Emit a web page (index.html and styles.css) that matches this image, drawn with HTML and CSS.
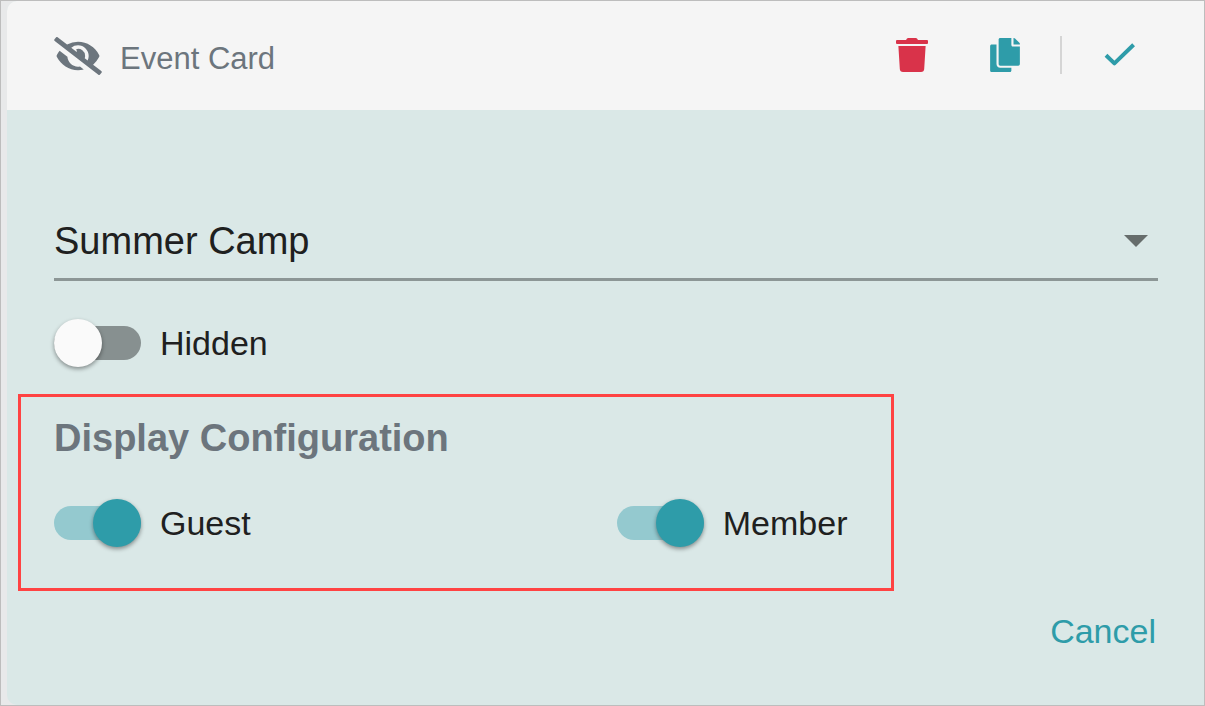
FILE: index.html
```html
<!doctype html>
<html lang="en">

<head>
  <meta charset="UTF-8" />
  <meta name="viewport" content="width=device-width, initial-scale=1.0" />
  <title>Event Card</title>
  <link rel="stylesheet" href="styles.css">
</head>

<body>
  <main class="card">
    <header class="card-header">
      <div class="card-title">
        <svg class="icon-hidden" viewBox="0 0 640 512" aria-hidden="true">
          <path d="M320 400c-75.85 0-137.25-58.71-142.9-133.11L72.2 185.82c-13.79 17.3-26.48 35.59-36.72 55.59a32.35 32.35 0 0 0 0 29.19C89.71 376.41 197.07 448 320 448c26.91 0 52.87-4 77.89-10.46L346 397.39a144.13 144.13 0 0 1-26 2.61zm313.82 58.1l-110.55-85.44a331.25 331.25 0 0 0 81.25-102.07 32.35 32.35 0 0 0 0-29.19C550.29 135.59 442.93 64 320 64a308.15 308.15 0 0 0-147.32 37.7L45.46 3.37A16 16 0 0 0 23 6.18L3.37 31.45A16 16 0 0 0 6.18 53.9l588.36 454.73a16 16 0 0 0 22.46-2.81l19.64-25.27a16 16 0 0 0-2.82-22.45zm-183.72-142l-39.3-30.38A94.75 94.75 0 0 0 416 256a94.76 94.76 0 0 0-121.31-92.21A47.65 47.65 0 0 1 304 192a46.64 46.64 0 0 1-1.54 10l-73.61-56.89A142.31 142.31 0 0 1 320 112a143.92 143.92 0 0 1 144 144c0 21.63-5.29 41.79-13.9 60.11z" />
        </svg>
        <h1>Event Card</h1>
      </div>
      <div class="card-actions">
        <button type="button" class="action action-delete" aria-label="Delete">
          <svg width="32" height="34" viewBox="0 0 32 34">
            <path d="M1 2H10L11 .6Q11.4 0 12.2 0H19.8Q20.6 0 21 .6L22 2H31Q32 2 32 3V5Q32 6 31 6H1Q0 6 0 5V3Q0 2 1 2Z" />
            <path d="M2.4 8H29.6L28.2 31Q28 34 25 34H7Q4 34 3.8 31Z" />
          </svg>
        </button>
        <button type="button" class="action" aria-label="Copy">
          <svg width="30" height="34" viewBox="0 0 448 512">
            <path d="M320 448v40c0 13.255-10.745 24-24 24H24c-13.255 0-24-10.745-24-24V120c0-13.255 10.745-24 24-24h72v296c0 30.879 25.121 56 56 56h168zm0-344V0H152c-13.255 0-24 10.745-24 24v368c0 13.255 10.745 24 24 24h272c13.255 0 24-10.745 24-24V128H344c-13.2 0-24-10.8-24-24zm120.971-31.029L375.029 7.029A24 24 0 0 0 358.059 0H352v96h96v-6.059a24 24 0 0 0-7.029-16.97z" />
          </svg>
        </button>
        <span class="divider"></span>
        <button type="button" class="action" aria-label="Save">
          <svg width="32" height="24" viewBox="0 0 32 24">
            <path class="check" d="M2 12.2L10.4 20.4L29.6 1.8" />
          </svg>
        </button>
      </div>
    </header>

    <form class="card-body">
      <div class="select-field">
        <select aria-label="Event">
          <option>Summer Camp</option>
        </select>
        <svg class="select-arrow" width="24" height="12" viewBox="0 0 24 12" aria-hidden="true">
          <path d="M0 0H24L12 12Z" />
        </svg>
      </div>

      <label class="toggle">
        <input type="checkbox">
        Hidden
      </label>

      <section class="display-config">
        <h2>Display Configuration</h2>
        <div class="toggle-row">
          <label class="toggle">
            <input type="checkbox" checked>
            Guest
          </label>
          <label class="toggle">
            <input type="checkbox" checked>
            Member
          </label>
        </div>
      </section>

      <button type="button" class="cancel">Cancel</button>
    </form>
  </main>
</body>

</html>
```
FILE: styles.css
```css
* {
  box-sizing: border-box;
}

body {
  margin: 0;
  min-height: 100vh;
  display: flex;
  padding-left: 6px;
  border: 1px solid #bdbdbd;
  background: #e8e9ea;
  color: #1e2020;
  font-family: Arial, "Liberation Sans", sans-serif;
}

button,
select {
  margin: 0;
  padding: 0;
  border: none;
  background: none;
  font-family: inherit;
  cursor: pointer;
}

.card {
  flex: 1;
  display: flex;
  flex-direction: column;
  overflow: hidden;
  border-radius: 10px 0 0 10px;
  background: #dae8e7;
}

/* Header */
.card-header {
  display: flex;
  align-items: center;
  justify-content: space-between;
  height: 109px;
  padding: 0 68px 0 47px;
  background: #f5f5f5;
}

.card-title {
  display: flex;
  align-items: flex-end;
  gap: 18px;
  color: #6c757d;
}

.card-title h1 {
  margin: 0;
  font-size: 31px;
  font-weight: 400;
  line-height: 32px;
}

.icon-hidden {
  width: 48px;
  height: 38px;
  fill: currentColor;
}

.card-actions {
  display: flex;
  align-items: center;
  gap: 40px;
  padding-bottom: 2px;
}

.action {
  display: flex;
  color: #2e9ca9;
}

.action svg {
  fill: currentColor;
}

.action-delete {
  margin-right: 22px;
  color: #d9334a;
}

.action .check {
  fill: none;
  stroke: currentColor;
  stroke-width: 4;
  stroke-linejoin: round;
}

.divider {
  width: 2px;
  height: 38px;
  margin-right: 2px;
  background: #d5d5d5;
}

/* Body */
.card-body {
  display: flex;
  flex-direction: column;
  padding: 93px 46px 40px 47px;
}

.select-field {
  display: grid;
  align-items: center;
  margin-bottom: 38px;
  border-bottom: 3px solid #8c9696;
}

.select-field select,
.select-arrow {
  grid-area: 1 / 1;
}

.select-field select {
  appearance: none;
  height: 75px;
  color: inherit;
  font-size: 38px;
}

.select-arrow {
  justify-self: end;
  margin-right: 10px;
  fill: #666d6c;
  pointer-events: none;
}

/* Toggles */
.toggle {
  display: flex;
  align-items: center;
  gap: 19px;
  font-size: 34px;
  line-height: 48px;
}

.toggle input {
  appearance: none;
  flex: none;
  display: grid;
  align-items: center;
  width: 87px;
  height: 48px;
  margin: 0;
  cursor: pointer;
}

.toggle input::before,
.toggle input::after {
  content: "";
  grid-area: 1 / 1;
}

.toggle input::before {
  height: 34px;
  border-radius: 17px;
  background: #879090;
}

.toggle input::after {
  width: 48px;
  height: 48px;
  border-radius: 50%;
  background: #fafafa;
  box-shadow: 0 2px 4px rgba(0, 0, 0, 0.4);
}

.toggle input:checked::before {
  background: #94c9cf;
}

.toggle input:checked::after {
  justify-self: end;
  background: #2e9ca9;
}

/* Display configuration */
.display-config {
  margin: 27px 264px 20px -36px;
  padding: 19px 33px 41px;
  border: 3px solid #ff4343;
}

.display-config h2 {
  margin: 0 0 39px;
  color: #6c757d;
  font-size: 38px;
  line-height: 44px;
}

.toggle-row {
  display: grid;
  grid-template-columns: 7fr 3fr;
}

.cancel {
  align-self: flex-end;
  padding-right: 2px;
  color: #2e9ca9;
  font-size: 34px;
  line-height: 40px;
}
```
